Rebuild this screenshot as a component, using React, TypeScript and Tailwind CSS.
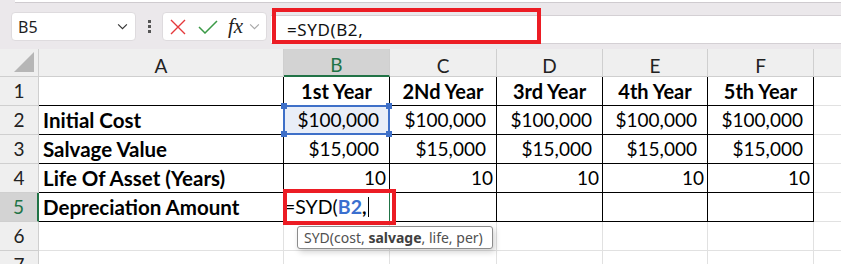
import React from "react";

const cols = [
  { key: "A", w: "w-[245px]" },
  { key: "B", w: "w-[106px]" },
  { key: "C", w: "w-[107px]" },
  { key: "D", w: "w-[106px]" },
  { key: "E", w: "w-[105px]" },
  { key: "F", w: "w-[106px]" },
  { key: "", w: "w-[60px]" },
];

const years = ["1st Year", "2Nd Year", "3rd Year", "4th Year", "5th Year"];

type Row = { label: string; values: string[]; pad: string; header?: boolean };

const rows: Row[] = [
  { label: "", values: years, pad: "justify-center", header: true },
  { label: "Initial Cost", values: Array(5).fill("$100,000"), pad: "justify-end pr-[10px]" },
  { label: "Salvage Value", values: Array(5).fill("$15,000"), pad: "justify-end pr-[10px]" },
  { label: "Life Of Asset (Years)", values: Array(5).fill("10"), pad: "justify-end pr-[3px]" },
  { label: "Depreciation Amount", values: Array(5).fill(""), pad: "" },
];

const Chevron = ({ className }: { className: string }) => (
  <svg viewBox="0 0 12 8" className={className} fill="none" stroke="currentColor" strokeWidth="1.3">
    <path d="M1 1.5 L6 6.5 L11 1.5" />
  </svg>
);

const Toolbar = () => (
  <div className="relative">
    <div className="h-[4px] bg-[#ebe8eb]">
      <div className="ml-[15px] h-[3px] bg-white border-b border-[#cfcbcf]" />
    </div>
    <div className="h-[45px] bg-[#ebe8eb] flex items-start pt-[8px] font-['Noto_Sans',sans-serif]">
      <div className="shrink-0 ml-[11px] w-[125px] h-[29px] bg-white rounded-[4px] border border-[#dedbde] flex items-center pl-[6px] pr-[7px] justify-between">
        <span className="text-[16px] text-[#1f1f1f]">B5</span>
        <Chevron className="w-[11px] h-[7px] text-[#333]" />
      </div>
      <div className="shrink-0 ml-[12px] mt-[8px] flex flex-col gap-[2px]">
        <div className="w-[3px] h-[3px] bg-[#555]" />
        <div className="w-[3px] h-[3px] bg-[#555]" />
        <div className="w-[3px] h-[3px] bg-[#555]" />
      </div>
      <div className="shrink-0 ml-[11px] w-[105px] h-[29px] bg-white rounded-[4px] border border-[#dedbde] flex items-center pl-[7px]">
        <svg viewBox="0 0 16 16" className="w-[16px] h-[16px]" stroke="#e5383b" strokeWidth="1.4" fill="none">
          <path d="M1 1 L15 15 M15 1 L1 15" />
        </svg>
        <svg viewBox="0 0 20 14" className="ml-[12px] w-[20px] h-[14px]" stroke="#3b9a47" strokeWidth="1.5" fill="none">
          <path d="M1 7 L7 13 L19 1" />
        </svg>
        <span className="ml-[10px] font-['Liberation_Serif',serif] italic text-[21px] leading-none text-[#222]">fx</span>
        <Chevron className="ml-[6px] w-[11px] h-[7px] text-[#a8a8a8]" />
      </div>
      <div className="ml-[4px] mt-[3px] flex-1 h-[29px] bg-white border-y border-[#d4d0d4] flex items-center pl-[16px]">
        <span className="text-[17px] text-[#111] tracking-[0.6px]">=SYD(B2,</span>
      </div>
    </div>
    {/* annotation box */}
    <div className="absolute left-[272px] top-[8px] w-[269px] h-[36px] border-[4px] border-[#ec1c24]" />
  </div>
);

const headerCell = "shrink-0 h-[28px] bg-[#efefef] border-r border-b border-[#cfcfcf] flex items-center justify-center pt-[7px] text-[19px] text-[#222]";

const Sheet = () => (
  <div className="relative font-['Lato',sans-serif]">
    {/* column headers */}
    <div className="flex">
      <div className="shrink-0 w-[39px] h-[28px] bg-[#efefef] border-r border-b border-[#cfcfcf] flex items-end justify-end pr-[4px] pb-[4px]">
        <div className="w-0 h-0 border-l-[20px] border-l-transparent border-b-[20px] border-b-[#b6b6b6]" />
      </div>
      {cols.map((c, k) =>
        c.key === "B" ? (
          <div key={k} className={`${c.w} shrink-0 h-[28px] bg-[#d3d3d3] border-r border-b-2 border-r-[#cfcfcf] border-b-[#217346] flex items-center justify-center pt-[7px] text-[19px] text-[#217346]`}>
            {c.key}
          </div>
        ) : (
          <div key={k} className={`${c.w} ${headerCell}`}>
            {c.key}
          </div>
        )
      )}
    </div>

    {/* table rows */}
    {rows.map((r, i) => {
      const n = i + 1;
      const active = n === 5;
      return (
        <div key={n} className="flex">
          <div
            className={
              active
                ? "shrink-0 w-[39px] h-[29px] bg-[#d3d3d3] border-r-2 border-b border-r-[#217346] border-b-[#cfcfcf] flex items-center justify-center text-[19px] text-[#217346]"
                : "shrink-0 w-[39px] h-[29px] bg-[#efefef] border-r border-b border-[#cfcfcf] flex items-center justify-center text-[19px] text-[#222]"
            }
          >
            {n}
          </div>
          <div className="shrink-0 w-[245px] h-[29px] border-r border-b border-black flex items-center pl-[4px] text-[20.5px] font-bold text-black whitespace-nowrap">
            {r.label}
          </div>
          {r.values.map((v, j) => {
            const w = cols[j + 1].w;
            if (n === 2 && j === 0) {
              return (
                <div key={j} className={`${w} shrink-0 relative h-[29px] border-r border-b border-black bg-[#e9eef8] flex items-center ${r.pad} text-[19px] text-black`}>
                  {v}
                  <div className="absolute -inset-[1px] border-2 border-[#3f70c8]" />
                  <div className="absolute -left-[3px] -top-[3px] w-[6px] h-[6px] bg-[#3f70c8]" />
                  <div className="absolute -right-[3px] -top-[3px] w-[6px] h-[6px] bg-[#3f70c8]" />
                  <div className="absolute -left-[3px] -bottom-[3px] w-[6px] h-[6px] bg-[#3f70c8]" />
                  <div className="absolute -right-[3px] -bottom-[3px] w-[6px] h-[6px] bg-[#3f70c8]" />
                </div>
              );
            }
            if (n === 5 && j === 0) {
              return (
                <div key={j} className={`${w} shrink-0 h-[29px] border-r border-b border-r-[#217346] border-b-black flex items-center text-[19.5px] text-black whitespace-nowrap`}>
                  <span>=SYD(</span>
                  <span className="font-bold text-[#3a6fcf]">B2</span>
                  <span className="font-bold">,</span>
                  <span className="ml-[1px] w-px h-[20px] bg-black" />
                </div>
              );
            }
            return (
              <div key={j} className={`${w} shrink-0 h-[29px] border-r border-b border-black flex items-center ${r.pad} text-black whitespace-nowrap ${r.header ? "font-bold text-[20px]" : "text-[19px]"}`}>
                {v}
              </div>
            );
          })}
          <div className="shrink-0 w-[60px] h-[29px] border-b border-[#e1e1e1]" />
        </div>
      );
    })}

    {/* empty rows */}
    {[6, 7].map((n) => (
      <div key={n} className="flex">
        <div className="shrink-0 w-[39px] h-[29px] bg-[#efefef] border-r border-b border-[#cfcfcf] flex items-center justify-center text-[19px] text-[#222]">
          {n}
        </div>
        {cols.map((c, k) => (
          <div key={k} className={`${c.w} shrink-0 h-[29px] border-r border-b border-[#e1e1e1]`} />
        ))}
      </div>
    ))}

    {/* annotation around B5 */}
    <div className="absolute left-[283px] top-[140px] w-[113px] h-[36px] border-[4px] border-[#ec1c24]" />

    {/* function tooltip */}
    <div className="absolute left-[297px] top-[177px] w-[196px] h-[23px] bg-white border border-[#8c8c8c] rounded-[3px] shadow-[2px_3px_6px_rgba(0,0,0,0.18)] flex items-center pl-[6px] font-['Noto_Sans',sans-serif] text-[14px] text-[#505050] whitespace-nowrap">
      SYD(cost,&nbsp;<b className="font-bold text-[#404040]">salvage</b>, life, per)
    </div>
  </div>
);

export default function App() {
  return (
    <div className="w-[841px] h-[264px] overflow-hidden bg-white">
      <Toolbar />
      <Sheet />
    </div>
  );
}
